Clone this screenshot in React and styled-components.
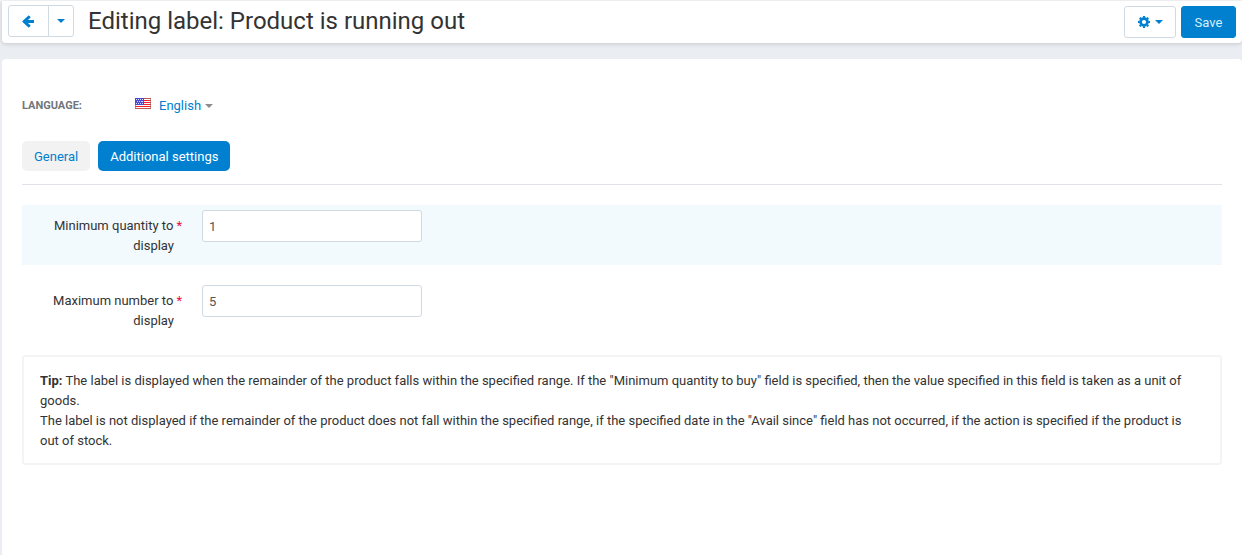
import React from "react";
import styled, { createGlobalStyle } from "styled-components";

const BLUE = "#0080cf";
const LINE = "#d0dae3";

const GlobalStyle = createGlobalStyle`
  *, *::before, *::after { box-sizing: border-box; }
  body {
    margin: 0;
    background: #eaeef2;
    color: #333;
    font: 13px/20px Roboto, "Liberation Sans", sans-serif;
  }
  button, input { font: inherit; }
`;

const Page = styled.div`
  display: flex;
  flex-direction: column;
  gap: 16px;
  min-height: 100vh;
  padding-left: 2px;
  border-top: 1px solid #f6f7f8;
`;

const Header = styled.header`
  display: flex;
  align-items: flex-start;
  padding: 4px 6px 5px;
  background: #fff;
  border-radius: 0 0 4px 4px;
  box-shadow: 0 1px 4px rgba(0, 0, 0, 0.16);
`;

const ButtonGroup = styled.div`
  display: flex;

  & > button:first-child {
    border-radius: 3px 0 0 3px;
  }
  & > button + button {
    margin-left: -1px;
    border-radius: 0 3px 3px 0;
  }
`;

const Button = styled.button`
  display: flex;
  align-items: center;
  justify-content: center;
  gap: 5px;
  height: 32px;
  width: ${(p) => p.$width}px;
  padding: ${(p) => (p.$primary ? "2px 0 0" : "0")};
  border: 1px solid ${(p) => (p.$primary ? BLUE : LINE)};
  border-radius: 3px;
  background: ${(p) => (p.$primary ? BLUE : "#fff")};
  color: ${(p) => (p.$primary ? "#d9effa" : BLUE)};
  cursor: pointer;
`;

const Title = styled.h1`
  flex: 1;
  margin: 0 14px;
  font-size: 24px;
  line-height: 32px;
  font-weight: 400;
`;

const Actions = styled.div`
  display: flex;
  gap: 5px;
  padding-top: 1px;
`;

const Caret = styled.span`
  border: 4px solid transparent;
  border-top-color: currentColor;
  border-bottom-width: 0;
`;

const Content = styled.main`
  flex: 1;
  padding: 37px 20px 20px;
  background: #fff;
  border-radius: 4px 4px 0 0;
`;

const LanguageBar = styled.div`
  display: flex;
  align-items: center;
  height: 20px;
  margin-bottom: 25px;
`;

const LanguageLabel = styled.span`
  width: 113px;
  font-size: 11px;
  font-weight: 700;
  color: #70767c;
`;

const LanguageButton = styled.button`
  display: flex;
  align-items: center;
  gap: 4px;
  padding: 0;
  border: 0;
  background: none;
  color: ${BLUE};
  cursor: pointer;

  svg { margin: 0 4px 5px 0; }
  ${Caret} { color: #8c8c8c; }
`;

const Tabs = styled.nav`
  display: flex;
  gap: 8px;
  padding-bottom: 13px;
  border-bottom: 1px solid #e0e2ea;
`;

const Tab = styled.a`
  padding: 6px 12px 4px;
  border-radius: 5px;
  background: ${(p) => (p.$active ? BLUE : "#f2f2f2")};
  color: ${(p) => (p.$active ? "#fff" : BLUE)};
  text-decoration: none;
`;

const Form = styled.form`
  display: flex;
  flex-direction: column;
  gap: 15px;
  margin-top: 20px;
`;

const Field = styled.div`
  display: flex;
  align-items: flex-start;
  gap: 28px;
  padding: 5px 0;
  background: ${(p) => (p.$highlighted ? "#f2fafe" : "transparent")};
`;

const FieldLabel = styled.label`
  width: 152px;
  padding: 6px 0 4px;
  text-align: right;
`;

const Required = styled.span`
  margin-right: -8px;
  padding-left: 3px;
  color: #ee0a45;
`;

const TextInput = styled.input`
  width: 220px;
  height: 32px;
  padding: 4px 6px;
  border: 1px solid ${LINE};
  border-radius: 3px;
  background: #fff;
  color: #555;
`;

const Tip = styled.section`
  padding: 14px 24px 12px 16px;
  border: 2px solid #f4f4f4;
  border-radius: 3px;

  p { margin: 0; }
`;

function ArrowIcon() {
  return (
    <svg width="13" height="13" viewBox="0 0 13 13" aria-hidden="true">
      <path
        d="M12 5.1v2.8H6l2.3 2.3c.3.3.3.7 0 1l-1.1 1.1c-.3.3-.7.3-1 0L.5 7c-.3-.3-.3-.7 0-1L6.2.7c.3-.3.7-.3 1 0l1.1 1.1c.3.3.3.7 0 1L6 5.1z"
        fill="currentColor"
      />
    </svg>
  );
}

function GearIcon() {
  return (
    <svg width="12" height="12" viewBox="-6 -6 12 12" aria-hidden="true">
      <circle r="3.4" fill="none" stroke="currentColor" strokeWidth="2.6" />
      {[0, 45, 90, 135, 180, 225, 270, 315].map((angle) => (
        <path key={angle} d="M-1.3-4.2L-1-6H1l.3 1.8z" fill="currentColor" transform={`rotate(${angle})`} />
      ))}
    </svg>
  );
}

function UsFlag() {
  return (
    <svg width="16" height="11" viewBox="0 0 16 11" shapeRendering="crispEdges" aria-hidden="true">
      <rect width="16" height="11" fill="#fff" />
      {[0, 2, 4, 6, 8, 10].map((y) => (
        <rect key={y} y={y} width="16" height="1" fill={y === 0 || y === 10 ? "#bd5a50" : "#f0202c"} />
      ))}
      <rect width="9" height="7" fill="#4a4bd0" />
      {[1, 3, 5].map((y) =>
        [y === 3 ? 2 : 1, y === 3 ? 4 : 3, y === 3 ? 6 : 5, 7].map((x) => (
          <rect key={`${x}-${y}`} x={x} y={y} width="1" height="1" fill="#d5d8ff" />
        ))
      )}
      <path d="M0 7h1v4H0zM15 0h1v11h-1z" fill="#b06050" opacity="0.7" />
    </svg>
  );
}

function NumberField({ id, label, value, highlighted }) {
  return (
    <Field $highlighted={highlighted}>
      <FieldLabel htmlFor={id}>
        {label}
        <Required>*</Required> display
      </FieldLabel>
      <TextInput id={id} type="text" defaultValue={value} required />
    </Field>
  );
}

export default function App() {
  return (
    <>
      <GlobalStyle />
      <Page>
        <Header>
          <ButtonGroup>
            <Button $width={41} type="button" aria-label="Back">
              <ArrowIcon />
            </Button>
            <Button $width={26} type="button" aria-label="More destinations">
              <Caret />
            </Button>
          </ButtonGroup>
          <Title>Editing label: Product is running out</Title>
          <Actions>
            <Button $width={52} type="button" aria-label="Settings">
              <GearIcon />
              <Caret />
            </Button>
            <Button $width={55} $primary type="submit" form="label-form">
              Save
            </Button>
          </Actions>
        </Header>
        <Content>
          <LanguageBar>
            <LanguageLabel id="language-label">LANGUAGE:</LanguageLabel>
            <LanguageButton type="button" aria-describedby="language-label">
              <UsFlag />
              English
              <Caret />
            </LanguageButton>
          </LanguageBar>
          <Tabs>
            <Tab href="#general">General</Tab>
            <Tab href="#additional" $active aria-current="page">
              Additional settings
            </Tab>
          </Tabs>
          <Form id="label-form">
            <NumberField id="min-quantity" label="Minimum quantity to" value="1" highlighted />
            <NumberField id="max-number" label="Maximum number to" value="5" />
            <Tip>
              <p>
                <b>Tip:</b> The label is displayed when the remainder of the product falls within the
                specified range. If the "Minimum quantity to buy" field is specified, then the value
                specified in this field is taken as a unit of goods.
              </p>
              <p>
                The label is not displayed if the remainder of the product does not fall within the
                specified range, if the specified date in the "Avail since" field has not occurred, if
                the action is specified if the product is out of stock.
              </p>
            </Tip>
          </Form>
        </Content>
      </Page>
    </>
  );
}
